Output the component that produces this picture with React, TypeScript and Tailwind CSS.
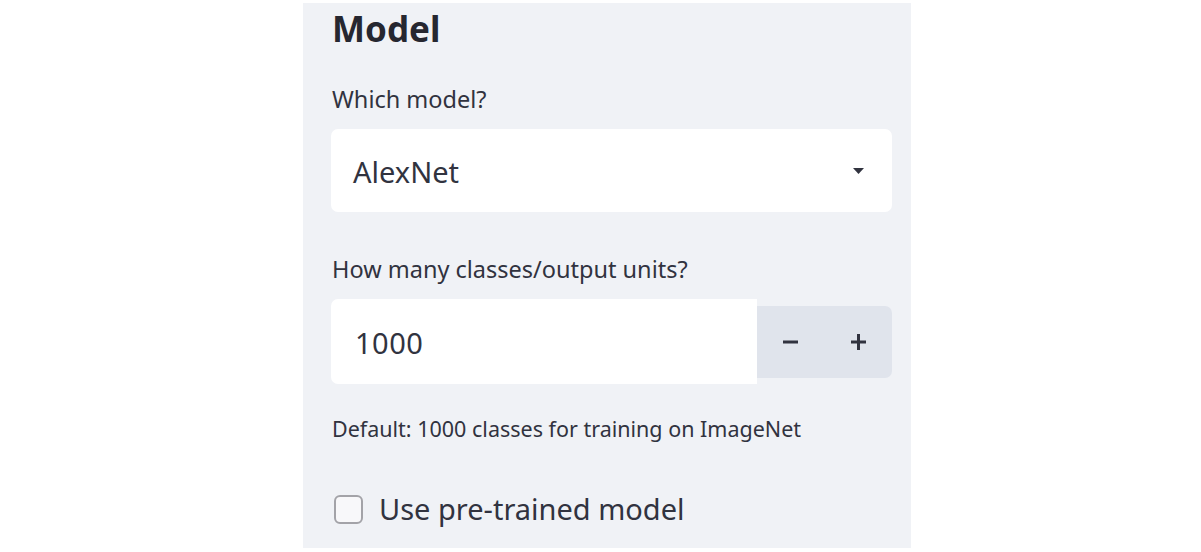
import React from "react";

// Streamlit-style sidebar section: model settings
function Caret() {
  return (
    <svg width="11" height="6" viewBox="0 0 11 6" className="block">
      <path d="M0 0 L11 0 L5.5 6 Z" fill="#31333f" />
    </svg>
  );
}

function Minus() {
  return (
    <svg width="15" height="16" viewBox="0 0 15 16" className="block">
      <rect x="0" y="6.5" width="15" height="3" fill="#31333f" />
    </svg>
  );
}

function Plus() {
  return (
    <svg width="15" height="16" viewBox="0 0 15 16" className="block">
      <rect x="0" y="6.5" width="15" height="3" fill="#31333f" />
      <rect x="6" y="0" width="3" height="16" fill="#31333f" />
    </svg>
  );
}

export default function App() {
  return (
    <div className="w-[1201px] h-[552px] bg-white pt-[3px] pl-[303px] font-['Noto_Sans',sans-serif] text-[#31333f]">
      <div className="w-[608px] h-[545px] bg-[#f0f2f6] pl-[28px] pr-[19px] pt-[2px] flex flex-col">
        <h2 className="text-[35px] leading-[48px] font-bold text-[#262730] pl-px">Model</h2>

        <label className="mt-[32px] text-[23.5px] leading-[28px] pl-px">Which model?</label>
        <div className="mt-[16px] h-[83px] bg-white rounded-[7px] flex items-center justify-between pl-[22px] pr-[28px]">
          <span className="text-[29px] leading-[40px] mt-[2px]">AlexNet</span>
          <Caret />
        </div>

        <label className="mt-[43px] text-[23.5px] leading-[28px] pl-px">How many classes/output units?</label>
        <div className="mt-[16px] h-[85px] flex items-center">
          <div className="h-full flex-1 bg-white rounded-l-[7px] flex items-center pl-[24px]">
            <span className="text-[29px] leading-[40px] mt-[2px] tracking-[0.5px]">1000</span>
          </div>
          <div className="w-[135px] h-[72px] bg-[#e0e4ec] rounded-r-[7px] flex">
            <div className="flex-1 flex items-center justify-center">
              <Minus />
            </div>
            <div className="flex-1 flex items-center justify-center">
              <Plus />
            </div>
          </div>
        </div>

        <p className="mt-[31px] text-[21.5px] leading-[28px] pl-px">Default: 1000 classes for training on ImageNet</p>

        <div className="mt-[46px] flex items-center gap-[16px] pl-[3px]">
          <span className="w-[29px] h-[29px] rounded-[6px] border-2 border-[#a3a3a8] bg-[#f8f8fa]" />
          <span className="text-[29px] leading-[40px]">Use pre-trained model</span>
        </div>
      </div>
    </div>
  );
}
